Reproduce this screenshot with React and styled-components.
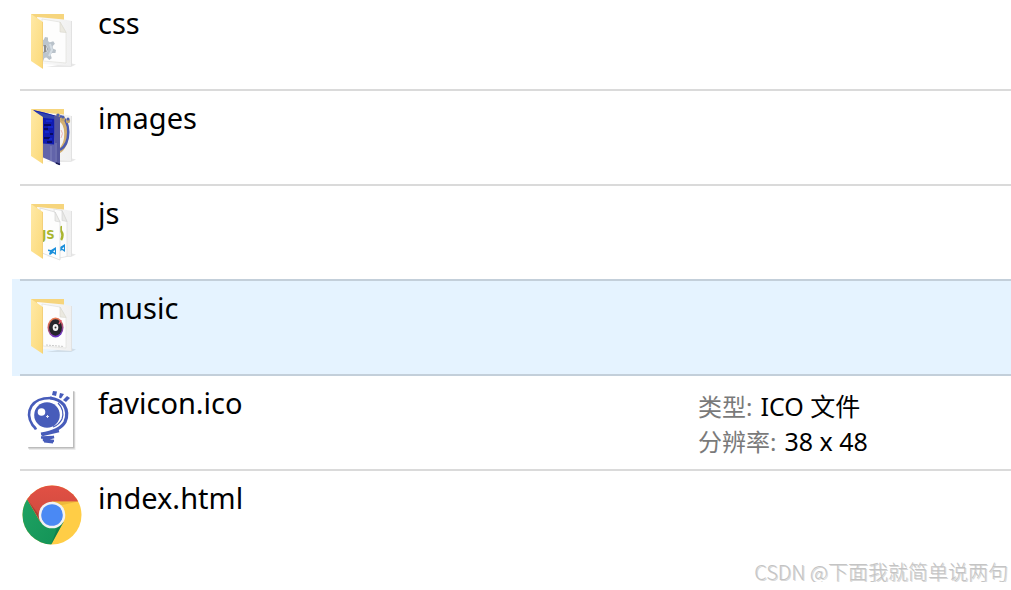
import React from "react";
import styled, { createGlobalStyle } from "styled-components";

const GlobalStyle = createGlobalStyle`
  * { box-sizing: border-box; }
  body {
    margin: 0;
    background: #fff;
    color: #000;
    font-family: "Noto Sans", "Noto Sans CJK SC", sans-serif;
    overflow-x: hidden;
  }
`;

const FileList = styled.ul`
  list-style: none;
  margin: 0;
  padding: 0 0 0 12px;
`;

const Item = styled.li`
  padding-left: 8px;
  background: ${(p) => (p.$selected ? "#e5f3ff" : "transparent")};
  margin-bottom: ${(p) => (p.$selected ? "-2px" : "0")};
  padding-bottom: ${(p) => (p.$selected ? "2px" : "0")};
`;

const Row = styled.div`
  display: grid;
  grid-template-columns: 60px minmax(0, 1fr) 313px;
  column-gap: 16px;
  min-height: 95px;
  padding: 14px 0 0 2px;
  border-top: 2px solid rgba(0, 0, 0, 0.145);

  ${Item}:first-child & {
    min-height: 89px;
    padding-top: 10px;
    border-top: 0;
  }
`;

const Icon = styled.svg`
  display: block;
  width: 60px;
  height: 60px;
  overflow: visible;
`;

const Name = styled.span`
  margin-top: -7px;
  font-size: 29px;
  line-height: 40px;
  white-space: nowrap;
`;

const Details = styled.dl`
  margin: -1px 0 0;
  line-height: 35px;
  white-space: nowrap;
`;

const Detail = styled.div`
  display: flex;
  gap: 8px;
`;

const Label = styled.dt`
  color: #7a7a7a;
  font-size: 24px;
`;

const Value = styled.dd`
  margin: 0;
  font-size: 25px;
`;

const Watermark = styled.footer`
  margin-top: -2px;
  padding-right: 3px;
  text-align: right;
  font-family: "Noto Sans CJK SC", sans-serif;
  font-weight: 300;
  font-size: 20px;
  line-height: 20px;
  color: #c4c4c4;
  text-shadow: 1px 1px 0 #d8d8d8;
`;

function Folder({ id, children }) {
  return (
    <Icon viewBox="0 0 60 60" aria-hidden="true">
      <defs>
        <linearGradient id={`${id}-front`} x1="0" y1="0" x2="1" y2="1">
          <stop offset="0" stopColor="#ffe9a6" />
          <stop offset="1" stopColor="#fbd978" />
        </linearGradient>
        <linearGradient id={`${id}-page`} x1="0" y1="0" x2="1" y2="0">
          <stop offset="0" stopColor="#fafafa" />
          <stop offset="1" stopColor="#f0f0f0" />
        </linearGradient>
        <clipPath id={`${id}-clip`}>
          <path d="M21 0H60V62H21z" />
        </clipPath>
      </defs>
      <path d="M48 53l6 1.500-5 2.500H24z" fill="#000" opacity=".09" />
      <path d="M9 4H42V50H9z" fill="#f6d57d" />
      <path d="M15 7l27 2.500 8 1.500V56l-29-2z" fill={`url(#${id}-page)`} />
      <path d="M49.500 11V56" stroke="#e2e2e2" strokeWidth="1" />
      {children}
      <path d="M9 4l12 8v47L9 51z" fill={`url(#${id}-front)`} />
      <path d="M20.500 12v46" stroke="#f3d07a" strokeWidth="1" />
    </Icon>
  );
}

function Sheet() {
  return (
    <>
      <path d="M20 9l18 3 6 10v31l-23-2z" fill="#fdfdfd" stroke="#e3e3e0" strokeWidth=".8" />
      <path d="M38 12v10l6 .5z" fill="#ebe9e0" stroke="#d8d6cc" strokeWidth=".6" />
    </>
  );
}

const teeth = [0, 45, 90, 135, 180, 225, 270, 315];

function CssIcon() {
  return (
    <Folder id="css">
      <Sheet />
      <g clipPath="url(#css-clip)">
        <g transform="translate(22 39)">
          {teeth.map((a) => (
            <path key={a} d="M-2.500-8l1-4h3l1 4z" fill="#b9c2ca" transform={`rotate(${a + 12})`} />
          ))}
          <circle r="6.500" fill="none" stroke="#bcc5cd" strokeWidth="5" />
          <circle r="3.500" fill="#e6eaed" stroke="#98a0a8" strokeWidth="1" />
          <path d="M1-4v7" stroke="#8d8d8d" strokeWidth="2" />
          <path d="M6-5l2 6-3 6" fill="none" stroke="#d5dde4" strokeWidth="2" />
        </g>
      </g>
    </Folder>
  );
}

function ImagesIcon() {
  return (
    <Folder id="images">
      <path d="M37 14c10 3 10 26 0 32" fill="none" stroke="#d3b071" strokeWidth="4.500" />
      <path d="M38 11c11 4 11 27 0 34" fill="none" stroke="#4a5bb0" strokeWidth="2.500" />
      <path d="M39 25q3 3 0 8" fill="none" stroke="#edb8b8" strokeWidth="1" />
      <g fill="#c3a56c">
        <circle cx="36" cy="11" r="2.200" />
        <circle cx="41" cy="14" r="2.200" />
        <circle cx="46" cy="16" r="2.200" />
      </g>
      <g fill="#4c5eae">
        <circle cx="36" cy="10" r="1.500" />
        <circle cx="41" cy="12" r="1.500" />
        <circle cx="46" cy="14" r="1.500" />
      </g>
      <path d="M11 5l11 2.500 16 4.500v48l-18-8V13z" fill="#6264aa" />
      <path d="M11 5l11 2.500 11 3-1 29-11-1V13z" fill="#101bb0" />
      <path d="M32 10l6 2v48l-5-2V38z" fill="#55579d" />
      <path d="M12 6l12 3 8 2v3l-10-1z" fill="#3345ad" />
      <path d="M22 20h7M22 24h4M28 29h3M22 33h6M25 37h5" stroke="#080b62" strokeWidth="2" />
      <path d="M24 16h6M26 22h5M23 27h4M27 34h3" stroke="#1937e8" strokeWidth="1" />
      <path d="M29 41v15M34 38v19" stroke="#8083bc" strokeWidth="1" />
      <path d="M34 58l4 1.500" fill="none" stroke="#191b54" strokeWidth="1.500" />
    </Folder>
  );
}

const CodeMark = styled.path.attrs({
  d: "M3-4v8L0 2l-3 2-1-1 1-2.500L-5 0l0-1.500 3 .5zM2-1L0 .5l2 1z",
  fill: "#1b8fdb",
  fillRule: "evenodd",
})``;

const ScriptText = styled.text`
  font: bold 13px "DejaVu Sans Condensed", "Liberation Sans", sans-serif;
  fill: #a9b52d;
`;

function JsIcon() {
  return (
    <Folder id="js">
      <path d="M32 9l8 1.500 5 11v35l-10 2z" fill="#fcfcfc" stroke="#dedede" strokeWidth=".8" />
      <path d="M40 10.500v10l5 1z" fill="#e9e9e7" stroke="#d2d2d0" strokeWidth=".6" />
      <path d="M40 27q-2 0-1 4 3 4 0 9" fill="none" stroke="#a9b52d" strokeWidth="2.500" />
      <g transform="translate(40 48)"><CodeMark /></g>
      <path d="M18 8l15 4 5 10v38l-18-7z" fill="#fdfdfd" stroke="#d9d9d9" strokeWidth=".8" />
      <path d="M33 12v9l5 1z" fill="#ececea" stroke="#d2d2d0" strokeWidth=".6" />
      <g clipPath="url(#js-clip)">
        <ScriptText x="20" y="39">JS</ScriptText>
      </g>
      <g transform="translate(31 51)"><CodeMark /></g>
    </Folder>
  );
}

function MusicIcon() {
  return (
    <Folder id="music">
      <defs>
        <linearGradient id="disc" x1="0" y1="0" x2="0.300" y2="1">
          <stop offset="0" stopColor="#ff8d4d" />
          <stop offset=".5" stopColor="#c45a62" />
          <stop offset="1" stopColor="#6b35c4" />
        </linearGradient>
      </defs>
      <Sheet />
      <ellipse cx="33.500" cy="32.500" rx="8" ry="10" fill="url(#disc)" />
      <ellipse cx="33.500" cy="32.500" rx="6.500" ry="8.300" fill="#25252b" />
      <ellipse cx="33.500" cy="32.500" rx="2.800" ry="3.600" fill="#f3f3f3" />
      <circle cx="33.500" cy="32.500" r="1" fill="#333" />
      <path d="M39 25l-2 4" stroke="#e65a6a" strokeWidth="1.500" />
      <path d="M24 50l18 1.500" stroke="#c9c9c9" strokeWidth="1" strokeDasharray="2 1" />
    </Folder>
  );
}

function FaviconIcon() {
  return (
    <Icon viewBox="0 0 60 60" aria-hidden="true">
      <path d="M7 2H53.500V60H7z" fill="#000" opacity=".08" />
      <path d="M6 1H52.500V58.500H6z" fill="#000" opacity=".2" />
      <path d="M5 0H51V57H5z" fill="#fff" />
      <g fill="none" stroke="#475cba">
        <path d="M14 39.500q-1-2-3.500-4.500Q4 25 9.500 16 15 7.500 30 8" strokeWidth="2.600" />
        <path d="M28 8q9 1 14 7 5 8 1 17-5 9-24 12" strokeWidth="3.200" />
        <path d="M36 13q7 7 4 16-3 6-9 8" strokeWidth="1.200" />
        <path d="M20 45l17-4" strokeWidth="2.600" />
        <path d="M19 47.500l13-.5-11 3 11 1" strokeWidth="2.500" />
      </g>
      <circle cx="25" cy="25" r="12.800" fill="#475cba" />
      <circle cx="19.500" cy="22" r="3.800" fill="#fff" />
      <path d="M25.500 25v3M24 26.500h3" stroke="#dfe3f5" strokeWidth="1" />
      <g fill="#475cba">
        <path d="M31 1l4 .5-1 4.500-4-1z" />
        <path d="M38 3l4 1-3 4.500-2-1z" />
        <path d="M45 6l3 2-4 4-3-2z" />
        <path d="M22 51h9v2.500l-9-1z" />
      </g>
    </Icon>
  );
}

function ChromeIcon() {
  return (
    <Icon viewBox="0 0 60 60" aria-hidden="true">
      <defs>
        <linearGradient id="red" x1="0" y1="0" x2="0" y2="1">
          <stop offset="0" stopColor="#e25044" />
          <stop offset="1" stopColor="#cd4a3f" />
        </linearGradient>
        <linearGradient id="green" x1="0" y1="0" x2="1" y2="1">
          <stop offset="0" stopColor="#21a464" />
          <stop offset="1" stopColor="#129256" />
        </linearGradient>
        <clipPath id="wheel"><circle cx="30" cy="30" r="29.500" /></clipPath>
      </defs>
      <g clipPath="url(#wheel)">
        <path d="M0 0H60V60H0z" fill="#ffcd46" />
        <path d="M0 0V60H29L41.500 37 18 36.500 5 14z" fill="url(#green)" />
        <path d="M0 0H60V16.500H30V30L18.500 37 5 14z" fill="url(#red)" />
        <path d="M30 16.500H56L36 21z" fill="#c88b28" opacity=".3" />
        <path d="M18.500 37L5 14l12 16z" fill="#5e3524" opacity=".4" />
        <path d="M41.500 37L29 60l7-20z" fill="#075c34" opacity=".35" />
      </g>
      <circle cx="30" cy="30" r="13.300" fill="#f2f2f2" />
      <circle cx="30" cy="30" r="10.800" fill="#4a89f4" />
    </Icon>
  );
}

const files = [
  { name: "css", Picture: CssIcon },
  { name: "images", Picture: ImagesIcon },
  { name: "js", Picture: JsIcon },
  { name: "music", Picture: MusicIcon, selected: true },
  {
    name: "favicon.ico",
    Picture: FaviconIcon,
    details: [
      ["类型:", "ICO 文件"],
      ["分辨率:", "38 x 48"],
    ],
  },
  { name: "index.html", Picture: ChromeIcon },
];

export default function App() {
  return (
    <>
      <GlobalStyle />
      <main>
        <FileList>
          {files.map(({ name, Picture, selected, details }) => (
            <Item key={name} $selected={selected}>
              <Row>
                <Picture />
                <Name>{name}</Name>
                {details && (
                  <Details>
                    {details.map(([label, value]) => (
                      <Detail key={label}>
                        <Label>{label}</Label>
                        <Value>{value}</Value>
                      </Detail>
                    ))}
                  </Details>
                )}
              </Row>
            </Item>
          ))}
        </FileList>
      </main>
      <Watermark>CSDN @下面我就简单说两句</Watermark>
    </>
  );
}
